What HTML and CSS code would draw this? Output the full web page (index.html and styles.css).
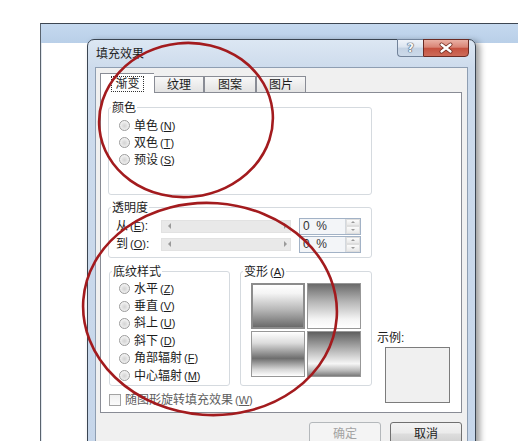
FILE: index.html
```html
<!DOCTYPE html>
<html lang="zh-CN">
<head>
<meta charset="utf-8">
<title>填充效果</title>
<link rel="stylesheet" href="styles.css">
</head>
<body>
<div class="desk">
  <div class="bgwin">
    <div class="bgwin-title"></div>
    <div class="bgwin-body"></div>
  </div>

  <div class="dialog">
    <div class="titlebar">
      <span class="title">填充效果</span>
      <div class="caption">
        <span class="btn-help">?</span>
        <span class="btn-close">
          <svg width="46" height="18" viewBox="0 0 46 18">
            <path d="M18.5 5.5 L27.5 12.5 M27.5 5.5 L18.5 12.5" stroke="#6a2419" stroke-width="4" stroke-linecap="round" fill="none"/>
            <path d="M18.5 5.5 L27.5 12.5 M27.5 5.5 L18.5 12.5" stroke="#ffffff" stroke-width="2.4" stroke-linecap="round" fill="none"/>
          </svg>
        </span>
      </div>
    </div>

    <div class="client">
      <div class="tabs">
        <div class="tab active"><span class="focus">渐变</span></div>
        <div class="tab w50">纹理</div>
        <div class="tab w52">图案</div>
        <div class="tab w50">图片</div>
      </div>

      <div class="panel">
        <div class="left">
          <div class="group g-color">
            <div class="gtitle">颜色</div>
            <div class="radios">
              <div class="radio"><i></i>单色<span class="acc">(<u>N</u>)</span></div>
              <div class="radio"><i></i>双色<span class="acc">(<u>T</u>)</span></div>
              <div class="radio"><i></i>预设<span class="acc">(<u>S</u>)</span></div>
            </div>
          </div>

          <div class="group g-trans">
            <div class="gtitle">透明度</div>
            <div class="rows">
              <div class="trow">
                <span class="tlabel">从<span class="acc">(<u>E</u>)</span>:</span>
                <div class="slider"><b class="al"></b><b class="ar"></b></div>
                <div class="spin"><span class="val">0&nbsp;&nbsp;%</span><div class="arrows"><b class="up"></b><b class="dn"></b></div></div>
              </div>
              <div class="trow">
                <span class="tlabel">到<span class="acc">(<u>O</u>)</span>:</span>
                <div class="slider"><b class="al"></b><b class="ar"></b></div>
                <div class="spin"><span class="val">0&nbsp;&nbsp;%</span><div class="arrows"><b class="up"></b><b class="dn"></b></div></div>
              </div>
            </div>
          </div>

          <div class="bottom">
            <div class="group g-style">
              <div class="gtitle">底纹样式</div>
              <div class="radios">
                <div class="radio r2"><i></i>水平<span class="acc">(<u>Z</u>)</span></div>
                <div class="radio r2"><i></i>垂直<span class="acc">(<u>V</u>)</span></div>
                <div class="radio r2"><i></i>斜上<span class="acc">(<u>U</u>)</span></div>
                <div class="radio r2"><i></i>斜下<span class="acc">(<u>D</u>)</span></div>
                <div class="radio r2"><i></i>角部辐射<span class="acc">(<u>F</u>)</span></div>
                <div class="radio r2"><i></i>中心辐射<span class="acc">(<u>M</u>)</span></div>
              </div>
            </div>
            <div class="group g-var">
              <div class="gtitle">变形<span class="acc">(<u>A</u>)</span></div>
              <div class="variants">
                <div class="v v1"></div>
                <div class="v v2"></div>
                <div class="v v3"></div>
                <div class="v v4"></div>
              </div>
            </div>
          </div>

          <div class="check"><i></i><span>随图形旋转填充效果<span class="acc">(<u>W</u>)</span></span></div>
        </div>

        <div class="right">
          <div class="sample-label">示例:</div>
          <div class="sample"></div>
        </div>
      </div>

      <div class="buttons">
        <div class="btn disabled">确定</div>
        <div class="btn">取消</div>
      </div>
    </div>
  </div>

  <svg class="marks" width="518" height="441" viewBox="0 0 518 441">
    <ellipse cx="186" cy="120" rx="87" ry="77" transform="rotate(-6 186 120)"/>
    <ellipse cx="210" cy="309" rx="127" ry="106" transform="rotate(4 210 309)"/>
  </svg>
</div>
</body>
</html>
```

FILE: styles.css
```css
* { box-sizing: border-box; }

body { margin: 0; background: #fff; }

.desk {
  position: relative;
  width: 518px;
  height: 441px;
  overflow: hidden;
  background: #fff;
  font-family: "Liberation Sans", "Noto Sans CJK SC", sans-serif;
  font-size: 12px;
  color: #1c1c1c;
}

/* background window */
.bgwin {
  margin: 23px 0 0 40px;
  height: 418px;
  border-top: 1px solid #3d4652;
  border-left: 1px solid #59636e;
}
.bgwin-title {
  height: 19px;
  background: linear-gradient(#c5d9ef, #b9cfe8);
}
.bgwin-body {
  height: calc(100% - 19px);
  border-left: 1px solid #e1e7ee;
  background: #fff;
}

/* dialog window */
.dialog {
  position: absolute;
  left: 87px;
  top: 39px;
  width: 389px;
  height: 420px;
  border: 1px solid #3a4552;
  border-radius: 7px 7px 0 0;
  background: linear-gradient(#dce7f3, #cddbec 28px, #c6d6ea);
  box-shadow: 4px 2px 6px rgba(0, 0, 0, 0.38);
  display: flex;
  flex-direction: column;
  z-index: 1;
}

.titlebar {
  height: 27px;
  display: flex;
  justify-content: space-between;
  align-items: flex-start;
  flex: none;
}
.title {
  padding-left: 8px;
  margin-top: 7px;
  line-height: 14px;
  color: #1e1e1e;
}
.caption {
  display: flex;
  margin: -1px 6px 0 0;
}
.btn-help {
  width: 26px;
  height: 18px;
  border: 1px solid #72839a;
  border-right: none;
  border-radius: 0 0 0 4px;
  background: linear-gradient(#f0f4fa, #dbe4ef 45%, #c4d2e3 50%, #ccdaea);
  display: flex;
  align-items: center;
  justify-content: center;
  font-family: "DejaVu Sans", sans-serif;
  font-size: 12px;
  font-weight: bold;
  color: #f6f8fb;
  text-shadow: 0 0 1px #39495e, 0 0 1px #39495e, 0 0 1px #39495e;
  line-height: 1;
}
.btn-close {
  width: 46px;
  height: 18px;
  border: 1px solid #6a2b24;
  border-radius: 0 0 4px 0;
  background: linear-gradient(#eab1a5, #d98475 45%, #c5513f 52%, #cd6b59);
  display: block;
}
.btn-close svg { display: block; margin: -1px 0 0 -1px; }

.client {
  flex: 1;
  margin: 0 7px;
  border: 1px solid #8e9eb2;
  border-bottom: none;
  background: #f0f0f0;
  padding: 5px 0 0 4px;
}

/* tabs */
.tabs {
  display: flex;
  align-items: flex-end;
  height: 20px;
  margin-bottom: -1px;
  position: relative;
  z-index: 2;
}
.tab {
  position: relative;
  height: 16px;
  margin-bottom: 1px;
  border: 1px solid #898c95;
  border-bottom: none;
  background: linear-gradient(#f8f8f8, #e2e2e2);
  display: flex;
  align-items: center;
  justify-content: center;
  line-height: 14px;
}
.tab.w50 { width: 50px; }
.tab.w52 { width: 52px; }
.tab.active {
  width: 54px;
  height: 20px;
  margin-bottom: 0;
  background: #fff;
  border-right: none;
  align-items: flex-start;
  padding-top: 3px;
}
.focus {
  outline: 1px dotted #333;
  padding: 0 3px;
  line-height: 14px;
}

.panel {
  width: 362px;
  height: 321px;
  border: 1px solid #898c95;
  background: #fff;
  display: flex;
  position: relative;
  z-index: 1;
}

.left {
  width: 264px;
  margin-left: 7px;
  padding-top: 14px;
  flex: none;
}

.group {
  border: 1px solid #d5dadf;
  border-radius: 3px;
}
.gtitle {
  width: max-content;
  margin: -7px 0 0 2px;
  padding: 0 1px;
  background: #fff;
  line-height: 14px;
}
.acc {
  font-size: 11px;
  margin-left: 2px;
}
.acc u { text-underline-offset: 1px; }

.g-color { height: 88px; }
.radios { padding-top: 2px; }
.radio {
  display: flex;
  align-items: center;
  height: 17px;
  padding-left: 10px;
  line-height: 14px;
}
.radio.r2 { height: 17.4px; padding-left: 9px; }
.g-style .radios { padding-top: 1px; }
.radio i {
  width: 11px;
  height: 11px;
  border-radius: 50%;
  border: 1px solid #9c9c9c;
  background: radial-gradient(circle at 50% 55%, #d3d3d3 0, #e2e2e2 35%, #f6f6f6 75%);
  margin-right: 4px;
  flex: none;
}

.g-trans { margin-top: 12px; height: 51px; }
.rows { padding-top: 2px; }
.trow {
  display: flex;
  align-items: center;
  height: 18px;
  padding-left: 7px;
}
.tlabel { width: 45px; line-height: 14px; }
.slider {
  width: 130px;
  height: 13px;
  background: #e9e9e9;
  border: 1px solid #e2e2e2;
  display: flex;
  align-items: center;
  justify-content: space-between;
  padding: 0 3px 0 6px;
}
.slider b { width: 0; height: 0; border-top: 3px solid transparent; border-bottom: 3px solid transparent; }
.slider .al { border-right: 3px solid #9a9a9a; }
.slider .ar { border-left: 3px solid #9a9a9a; }

.spin {
  margin-left: 8px;
  width: 62px;
  height: 17px;
  border: 1px solid #a2b2c6;
  background: #f3f5f8;
  display: flex;
}
.val {
  flex: 1;
  padding-left: 3px;
  line-height: 15px;
  color: #333;
}
.arrows {
  width: 15px;
  display: flex;
  flex-direction: column;
  border-left: 1px solid #d3d8de;
}
.arrows b {
  flex: 1;
  display: flex;
  align-items: center;
  justify-content: center;
  background: linear-gradient(#fbfbfb, #e8e8e8);
  border: 1px solid #dedede;
}
.arrows b::before {
  content: "";
  width: 0;
  height: 0;
  border-left: 2px solid transparent;
  border-right: 2px solid transparent;
}
.arrows .up::before { border-bottom: 2px solid #9a9a9a; }
.arrows .dn::before { border-top: 2px solid #9a9a9a; }

.bottom { display: flex; margin-top: 13px; }
.g-style { width: 121px; height: 115px; margin-left: 1px; }
.g-var { width: 132px; height: 115px; margin-left: 10px; }

.variants {
  display: grid;
  grid-template-columns: 54px 54px;
  grid-template-rows: 46px 46px;
  gap: 2px;
  margin: 4px 0 0 10px;
}
.v { border: 1px solid #979797; }
.v1 { background: linear-gradient(#ffffff 0%, #f4f4f4 20%, #b5b5b5 60%, #6a6a6a 100%); border: 2px solid #8c8c8c; }
.v2 { background: linear-gradient(#6a6a6a 0%, #b5b5b5 40%, #f4f4f4 80%, #ffffff 100%); }
.v3 { background: linear-gradient(#ffffff 0%, #dcdcdc 25%, #6e6e6e 60%, #d6d6d6 85%, #ffffff 100%); }
.v4 { background: linear-gradient(#5f5f5f 0%, #a9a9a9 35%, #f6f6f6 72%, #b9b9b9 88%, #7a7a7a 100%); }

.check {
  display: flex;
  align-items: center;
  height: 13px;
  margin: 7px 0 0 1px;
  color: #5e5e5e;
  line-height: 14px;
}
.check i {
  width: 12px;
  height: 12px;
  border: 1px solid #a3a3a3;
  background: linear-gradient(#f0f0f0, #fbfbfb);
  margin-right: 4px;
  flex: none;
}

.right {
  flex: 1;
  display: flex;
  flex-direction: column;
  justify-content: flex-end;
  padding-bottom: 9px;
}
.sample-label {
  margin: 0 0 2px 5px;
  line-height: 14px;
}
.sample {
  width: 65px;
  height: 56px;
  margin-left: 13px;
  border: 1px solid #7c7c7c;
  background: #f0f0f0;
}

.buttons {
  display: flex;
  justify-content: flex-end;
  gap: 9px;
  width: 362px;
  margin-top: 9px;
}
.btn {
  width: 72px;
  height: 23px;
  border: 1px solid #707070;
  border-radius: 3px;
  background: linear-gradient(#f3f3f3, #ebebeb 48%, #dddddd 52%, #cfcfcf);
  display: flex;
  align-items: center;
  justify-content: center;
  line-height: 14px;
}
.btn.disabled {
  border-color: #b4b8bb;
  background: #f4f4f4;
  color: #a3a3a3;
}

/* hand-drawn annotation circles */
.marks {
  position: absolute;
  left: 0;
  top: 0;
  z-index: 10;
  pointer-events: none;
}
.marks ellipse {
  fill: none;
  stroke: #a31b1e;
  stroke-width: 2.6;
}
```
